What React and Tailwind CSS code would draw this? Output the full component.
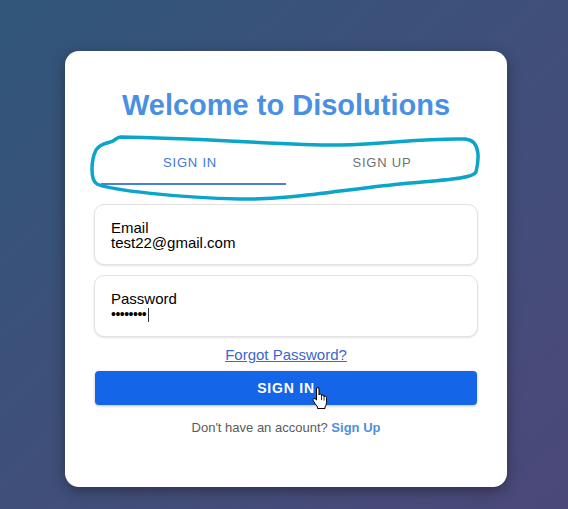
import { useState } from 'react';

const font = { fontFamily: '"Liberation Sans", Arial, sans-serif' };

function HandCursor() {
  return (
    <svg width="18" height="23" viewBox="0 0 18 23" className="absolute left-[217px] top-[16px] pointer-events-none">
      <path
        d="M4.5 2 Q4.5 0.5 5.75 0.5 Q7 0.5 7 2 V8 Q7 7 8.25 7 Q9.5 7 9.5 8.5 V9 Q9.5 8 10.75 8 Q12 8 12 9.5 V10 Q12 9 13.25 9 Q14.5 9 14.5 10.5 V15.5 Q14.5 18 13 20 V21.5 H5.5 V20 Q3 17 1.2 13.5 Q0.5 12 1.8 11.5 Q3 11 4.5 13 Z"
        fill="#fff"
        stroke="#000"
        strokeWidth="1"
        strokeLinejoin="round"
      />
      <path d="M9.5 9 V13 M12 10 V13.5" stroke="#000" strokeWidth="0.8" fill="none" />
    </svg>
  );
}

function Field({ label, children }) {
  return (
    <div className="w-full rounded-[10px] border border-[#e2e2e2] bg-white px-4 pt-[15px] pb-[14px] shadow-[0_1px_2px_rgba(0,0,0,0.12)]">
      <div className="text-[15px] leading-[15px] text-black">{label}</div>
      <div className="text-[15px] leading-[15px] text-black">{children}</div>
    </div>
  );
}

export default function App() {
  const [tab, setTab] = useState('in');

  return (
    <div
      className="relative min-h-screen w-full bg-gradient-to-br from-[#305679] to-[#4b4879] pt-[51px] pl-[65px]"
      style={font}
    >
      <div className="w-[442px] h-[436px] rounded-[14px] bg-white px-[29px] pt-[37px] shadow-[0_4px_14px_rgba(0,0,0,0.35)]">
        <h1 className="text-center text-[29px] font-bold leading-[35px] text-[#4a90e2]">
          Welcome to Disolutions
        </h1>

        {/* Tabs */}
        <div className="mt-[14px] flex h-[48px]">
          <button
            onClick={() => setTab('in')}
            className={`relative flex-1 pt-[4px] text-[13px] tracking-[0.8px] ${tab === 'in' ? 'text-[#3d79d6]' : 'text-[#707070]'}`}
          >
            SIGN IN
            {tab === 'in' && <span className="absolute bottom-0 left-[7px] right-0 h-[2px] bg-[#4a7fe0]" />}
          </button>
          <button
            onClick={() => setTab('up')}
            className={`relative flex-1 pt-[4px] text-[13px] tracking-[0.8px] ${tab === 'up' ? 'text-[#3d79d6]' : 'text-[#707070]'}`}
          >
            SIGN UP
            {tab === 'up' && <span className="absolute bottom-0 left-0 right-0 h-[2px] bg-[#4a7fe0]" />}
          </button>
        </div>

        <div className="mt-[19px] flex flex-col gap-[10px]">
          <Field label="Email">test22@gmail.com</Field>
          <Field label="Password">
            <span className="inline-flex items-center">
              <span className="text-[14px] tracking-[-0.5px]">••••••••</span>
              <span className="ml-[2px] inline-block h-[14px] w-px bg-[#333]" />
            </span>
          </Field>
        </div>

        <div className="mt-[9px] text-center leading-[17px]">
          <a href="#" className="text-[15px] leading-[17px] text-[#3a66cf] underline">
            Forgot Password?
          </a>
        </div>

        <button className="relative mt-[8px] h-[34px] w-[382px] ml-px rounded-[4px] bg-[#1565e8] text-[14px] font-semibold tracking-[0.8px] text-white shadow-[0_1px_3px_rgba(0,0,0,0.25)]">
          SIGN IN
          <HandCursor />
        </button>

        <p className="mt-[13px] text-center text-[13px] leading-[20px] text-[#5a5a5a]">
          Don't have an account?{' '}
          <span className="font-bold text-[#4a90e2]">Sign Up</span>
        </p>
      </div>

      {/* hand-drawn highlight around the tabs */}
      <svg className="pointer-events-none absolute left-0 top-0" width="568" height="509">
        <path
          d="M121 137 C200 138 300 146 340 145 C390 144 420 138 465 139 C481 140 479 160 476 172 C473 179 440 180 400 184 C340 190 290 200 240 199 C180 198 110 190 97 184 C90 180 91 160 96 150 C100 143 110 143 113 141 C116 139 118 137 121 137 Z"
          fill="none"
          stroke="#0aa5c9"
          strokeWidth="3.5"
          strokeLinejoin="round"
        />
      </svg>
    </div>
  );
}
